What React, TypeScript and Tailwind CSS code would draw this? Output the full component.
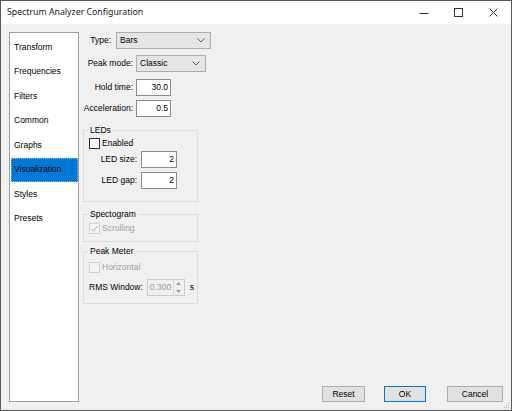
import React from "react";

const pages = ["Transform", "Frequencies", "Filters", "Common", "Graphs", "Visualization", "Styles", "Presets"];

function Chevron() {
  return (
    <svg width="8" height="5" viewBox="0 0 8 5" className="shrink-0">
      <path d="M0.5 0.5 L4 4 L7.5 0.5" fill="none" stroke="#606060" strokeWidth="1" />
    </svg>
  );
}

function Combo({ value, className }: { value: string; className: string }) {
  return (
    <div className={`flex h-[17px] items-center border border-[#adadad] bg-[#e5e5e5] pl-[3px] pr-[5px] ${className}`}>
      <span className="flex-1">{value}</span>
      <Chevron />
    </div>
  );
}

function TextBox({ value, className = "w-[35px]" }: { value: string; className?: string }) {
  return (
    <div className={`flex h-[17px] items-center justify-end border border-[#8c8c8c] bg-white pr-[2px] ${className}`}>
      {value}
    </div>
  );
}

function CheckBox({ label, checked, disabled }: { label: string; checked?: boolean; disabled?: boolean }) {
  return (
    <div className="flex h-[12px] items-center gap-[2px]">
      <div
        className={`flex h-[11px] w-[11px] items-center justify-center border ${
          disabled ? "border-[#cfcfcf] bg-[#f4f4f4]" : "border-[#333333] bg-white"
        }`}
      >
        {checked && (
          <svg width="9" height="9" viewBox="0 0 9 9">
            <path d="M1 4.5 L3.5 7 L8 1.5" fill="none" stroke={disabled ? "#b0b0b0" : "#333333"} strokeWidth="1" />
          </svg>
        )}
      </div>
      <span className={disabled ? "text-[#a3a3a3]" : ""}>{label}</span>
    </div>
  );
}

function Group({ title, className, children }: { title: string; className: string; children: React.ReactNode }) {
  return (
    <fieldset className={`w-[115px] border border-[#dcdcdc] pl-[4px] ${className}`}>
      <legend className="px-[2px] leading-[10px]">{title}</legend>
      <div className="pl-[1px]">{children}</div>
    </fieldset>
  );
}

function Button({ label, className }: { label: string; className: string }) {
  return (
    <div className={`flex h-[16px] items-center justify-center bg-[#e1e1e1] ${className}`}>{label}</div>
  );
}

export default function App() {
  return (
    <div className="relative flex h-[411px] w-[512px] flex-col border border-[#595959] bg-white font-['Liberation_Sans',Arial,sans-serif] text-[8.5px] text-black">
      {/* Title bar */}
      <div className="flex h-[23px] items-center bg-white">
        <span className="flex-1 pl-[6px] font-['Noto_Sans',sans-serif] text-[8.75px] text-[#1a1a1a]">
          Spectrum Analyzer Configuration
        </span>
        <div className="flex h-full w-[35px] items-center justify-center">
          <svg width="10" height="10" viewBox="0 0 10 10">
            <path d="M0.5 5.5 H9.5" stroke="#333" strokeWidth="1" />
          </svg>
        </div>
        <div className="flex h-full w-[35px] items-center justify-center">
          <svg width="9" height="9" viewBox="0 0 9 9">
            <rect x="0.5" y="0.5" width="8" height="8" fill="none" stroke="#333" strokeWidth="1" />
          </svg>
        </div>
        <div className="flex h-full w-[35px] items-center justify-center">
          <svg width="9" height="9" viewBox="0 0 9 9">
            <path d="M0.5 0.5 L8.5 8.5 M8.5 0.5 L0.5 8.5" stroke="#333" strokeWidth="1" />
          </svg>
        </div>
      </div>

      {/* Client area */}
      <div className="relative flex flex-1 bg-[#f0f0f0] pb-[8px] pl-[8px] pr-[8px] pt-[8px]">
        {/* Page list */}
        <div className="flex w-[70px] flex-col border border-[#a0a0a0] bg-white pt-[2px]">
          {pages.map((p) =>
            p === "Visualization" ? (
              <div
                key={p}
                className="ml-[1px] flex h-[24.5px] items-center border border-dotted border-[#7fb8ec] bg-[#0078d7] pl-[2px]"
              >
                {p}
              </div>
            ) : (
              <div key={p} className="ml-[1px] flex h-[24.5px] items-center pl-[3px]">
                {p}
              </div>
            )
          )}
        </div>

        {/* Settings */}
        <div className="ml-[4px] flex flex-1 flex-col">
          <div className="flex h-[17px] items-center">
            <span className="w-[28px] text-right">Type:</span>
            <Combo value="Bars" className="ml-[5px] w-[95px]" />
          </div>
          <div className="mt-[6px] flex h-[17px] items-center">
            <span className="w-[50px] text-right">Peak mode:</span>
            <Combo value="Classic" className="ml-[3px] w-[70px]" />
          </div>
          <div className="mt-[7px] flex h-[17px] items-center">
            <span className="w-[50px] text-right">Hold time:</span>
            <TextBox value="30.0" className="ml-[3px] w-[35px]" />
          </div>
          <div className="mt-[4px] flex h-[17px] items-center">
            <span className="w-[50px] text-right">Acceleration:</span>
            <TextBox value="0.5" className="ml-[3px] w-[35px]" />
          </div>

          <Group title="LEDs" className="mt-[8px] pb-[12px]">
            <div className="mt-[2px]">
              <CheckBox label="Enabled" />
            </div>
            <div className="mt-[2px] flex h-[17px] items-center">
              <span className="w-[48px] text-right">LED size:</span>
              <TextBox value="2" className="ml-[4px] w-[36px]" />
            </div>
            <div className="mt-[4px] flex h-[17px] items-center">
              <span className="w-[48px] text-right">LED gap:</span>
              <TextBox value="2" className="ml-[4px] w-[36px]" />
            </div>
          </Group>

          <Group title="Spectogram" className="mt-[7px] pb-[7px]">
            <div className="mt-[3px]">
              <CheckBox label="Scrolling" checked disabled />
            </div>
          </Group>

          <Group title="Peak Meter" className="mt-[4px] pb-[7px]">
            <div className="mt-[5px]">
              <CheckBox label="Horizontal" disabled />
            </div>
            <div className="mt-[6px] flex h-[17px] items-center">
              <span>RMS Window:</span>
              <div className="ml-[4px] flex h-[17px] w-[38px] items-stretch border border-[#cccccc] bg-[#f0f0f0] text-[#9a9a9a]">
                <span className="flex flex-1 items-center pl-[2px]">0.300</span>
                <div className="flex w-[11px] flex-col border-l border-[#dadada]">
                  <div className="flex flex-1 items-center justify-center">
                    <svg width="5" height="3" viewBox="0 0 5 3">
                      <path d="M0 3 L2.5 0 L5 3 Z" fill="#a0a0a0" />
                    </svg>
                  </div>
                  <div className="flex flex-1 items-center justify-center">
                    <svg width="5" height="3" viewBox="0 0 5 3">
                      <path d="M0 0 L2.5 3 L5 0 Z" fill="#a0a0a0" />
                    </svg>
                  </div>
                </div>
              </div>
              <span className="ml-[5px]">s</span>
            </div>
          </Group>

          <div className="mt-auto flex justify-end">
            <Button label="Reset" className="w-[43px] border border-[#adadad]" />
            <Button label="OK" className="ml-[19px] w-[42px] border border-[#0078d7]" />
            <Button label="Cancel" className="ml-[21px] w-[56px] border border-[#adadad]" />
          </div>
        </div>

        {/* Resize grip */}
        <svg width="7" height="7" viewBox="0 0 7 7" className="absolute bottom-[1px] right-[1px]">
          <rect x="5" y="1" width="1" height="1" fill="#b5b5b5" />
          <rect x="3" y="3" width="1" height="1" fill="#b5b5b5" />
          <rect x="5" y="3" width="1" height="1" fill="#b5b5b5" />
          <rect x="1" y="5" width="1" height="1" fill="#b5b5b5" />
          <rect x="3" y="5" width="1" height="1" fill="#b5b5b5" />
          <rect x="5" y="5" width="1" height="1" fill="#b5b5b5" />
        </svg>
      </div>
    </div>
  );
}
